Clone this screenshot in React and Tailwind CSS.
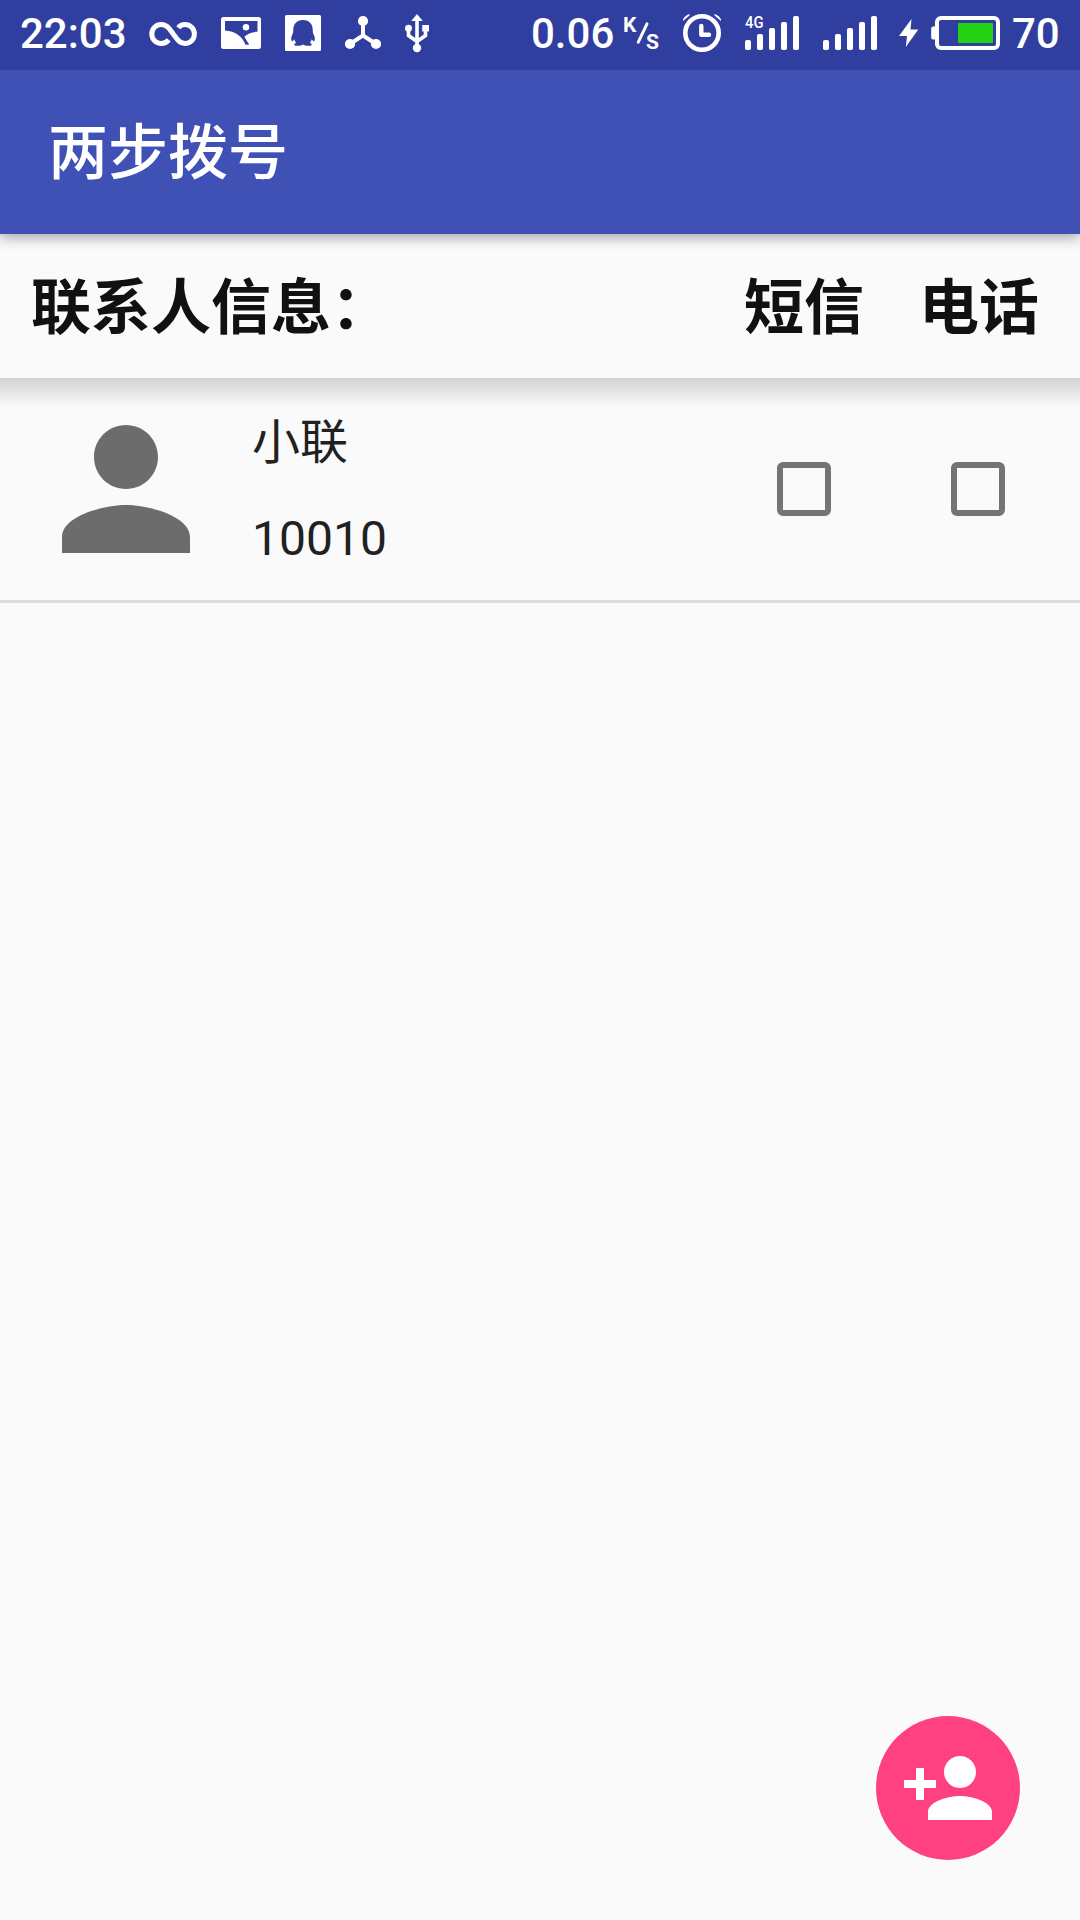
const PERSON = "M12 12c2.21 0 4-1.79 4-4s-1.79-4-4-4-4 1.79-4 4 1.79 4 4 4zm0 2c-2.67 0-8 1.34-8 4v2h16v-2c0-2.66-5.33-4-8-4z";
const PERSON_ADD = "M15 12c2.21 0 4-1.79 4-4s-1.79-4-4-4-4 1.79-4 4 1.79 4 4 4zm-9-2V7H4v3H1v2h3v3h2v-3h3v-2H6zm9 4c-2.67 0-8 1.34-8 4v2h16v-2c0-2.66-5.33-4-8-4z";

function InfinityIcon() {
  return (
    <svg className="h-[70px] w-12 shrink-0" viewBox="149 0 48 70" fill="none" stroke="white" strokeWidth="5">
      <path d="M168.8 39.8C166.8 42.2 164.200 43.400 161.200 43.400A9.400 9.400 0 0 1 161.200 24.600C164.800 24.600 167 26 169 28.300L177.200 39.200C179.400 42 182 43.400 185 43.400A9.400 9.400 0 0 0 185 24.600C182.400 24.600 180 25.600 178.300 27.800" />
    </svg>
  );
}

function PictureIcon() {
  return (
    <svg className="ml-6 h-[70px] w-10 shrink-0" viewBox="221 0 40 70" fill="white">
      <path fillRule="evenodd" d="M223.500 17H258.500Q261 17 261 19.500V46.500Q261 49 258.500 49H223.500Q221 49 221 46.500V19.500Q221 17 223.500 17ZM225 21V30.500C235 31 242.500 36.500 245.500 44.700H249.200L244.300 36.800C247.500 33.500 252 32 257.500 31.800V21Z" />
      <circle cx="246" cy="27.200" r="3.200" />
    </svg>
  );
}

function PenguinIcon() {
  return (
    <svg className="ml-6 h-[70px] w-9 shrink-0" viewBox="285 0 36 70">
      <rect x="285" y="15" width="36" height="36" rx="1.500" fill="white" />
      <path fill="#303f9f" d="M303 20C296.500 20 293.300 24.500 293.300 29.500C293.300 32.500 292.800 33.500 291.900 35.500C290.900 37.800 291 40.800 292 41.200C292.800 41.400 293.600 40.200 294.300 39.200C294.600 40.800 295.400 42 296.300 42.800C294.600 43.300 294 44 294.400 44.900C295.400 46.300 301.500 46 303 44.600C304.500 46 310.600 46.300 311.600 44.900C312 44 311.400 43.300 309.700 42.800C310.600 42 311.400 40.800 311.700 39.200C312.400 40.200 313.200 41.400 314 41.200C315 40.800 315.100 37.800 314.100 35.500C313.200 33.500 312.700 32.500 312.700 29.500C312.700 24.500 309.500 20 303 20Z" />
    </svg>
  );
}

function NodesIcon() {
  return (
    <svg className="ml-6 h-[70px] w-9 shrink-0" viewBox="345 0 36 70" fill="white">
      <path d="M363 21V35.500L350 44M363 35.500L376 44" fill="none" stroke="white" strokeWidth="4" />
      <circle cx="363" cy="21" r="5.100" />
      <circle cx="350" cy="44" r="5.100" />
      <circle cx="376" cy="44" r="5.100" />
    </svg>
  );
}

function UsbIcon() {
  return (
    <svg className="ml-6 h-[70px] w-6 shrink-0" viewBox="405 0 24 70" fill="white">
      <path d="M417 20V48M408.500 28V35.500L417 41.500L425.500 35.500V28" fill="none" stroke="white" strokeWidth="3.600" />
      <path d="M417 14L422.800 21H411.200Z" />
      <circle cx="408.500" cy="28.300" r="3.500" />
      <rect x="422.200" y="25" width="6.800" height="6.500" />
      <circle cx="417" cy="48" r="4.200" />
    </svg>
  );
}

function AlarmIcon() {
  return (
    <svg className="h-[70px] w-10 shrink-0" viewBox="682 0 40 70" fill="none" stroke="white">
      <circle cx="702" cy="33" r="16.700" strokeWidth="4.600" />
      <path d="M701.300 26V34.700H709" strokeWidth="4.400" strokeLinejoin="round" strokeLinecap="round" />
      <path d="M683 19.500Q684.500 15.500 689.500 14V15.500L683 21ZM721 19.500Q719.500 15.500 714.500 14V15.500L721 21Z" fill="white" stroke="none" />
    </svg>
  );
}

function SignalIcon({ label }) {
  return (
    <svg className="h-[70px] w-[54px] shrink-0" viewBox="0 0 54 70" fill="white">
      <rect x="0" y="40" width="6" height="10" rx="1.800" />
      <rect x="12" y="34" width="6" height="16" rx="1.800" />
      <rect x="24" y="28" width="6" height="22" rx="1.800" />
      <rect x="36" y="22" width="6" height="28" rx="1.800" />
      <rect x="48" y="16" width="6" height="34" rx="1.800" />
      {label && (
        <text x="0" y="28" fontSize="16" fontWeight="500" fontFamily="Roboto, sans-serif" textLength="18.500" lengthAdjust="spacingAndGlyphs">{label}</text>
      )}
    </svg>
  );
}

function BoltIcon() {
  return (
    <svg className="ml-[22px] h-[70px] w-5 shrink-0" viewBox="899 0 20 70" fill="white">
      <path d="M911.500 19L899 36H907L905.800 47L918.300 29.500H910.500Z" />
    </svg>
  );
}

function BatteryIcon() {
  return (
    <svg className="ml-3 h-[70px] w-[69px] shrink-0" viewBox="931 0 69 70">
      <rect x="937" y="18" width="61" height="30" rx="4" fill="none" stroke="white" strokeWidth="4" />
      <path d="M935.500 26.500H933Q931.200 26.500 931.200 28.500V37.500Q931.200 39.500 933 39.500H935.500Z" fill="white" />
      <rect x="958" y="23" width="35" height="20" rx=".8" fill="#22d014" />
    </svg>
  );
}

function StatusBar() {
  return (
    <div className="z-20 flex h-[70px] shrink-0 items-center bg-[#303f9f] text-[42px] leading-none font-medium text-white">
      <span className="w-[149px] shrink-0 pb-[2px] pl-5">22:03</span>
      <InfinityIcon />
      <PictureIcon />
      <PenguinIcon />
      <NodesIcon />
      <UsbIcon />
      <span className="ml-[102px] w-[93px] shrink-0 pb-[2px]">0.06</span>
      <svg className="mr-[22px] h-[70px] w-9 shrink-0" viewBox="624 0 36 70" fill="white" fontFamily="Roboto, sans-serif" fontWeight="700">
        <text x="623" y="32.300" fontSize="21">K</text>
        <path d="M638.300 42.200L647 23.800" stroke="white" strokeWidth="3" strokeLinecap="round" />
        <text x="646" y="48.500" fontSize="21">S</text>
      </svg>
      <AlarmIcon />
      <div className="ml-[23px] flex gap-6">
        <SignalIcon label="4G" />
        <SignalIcon />
      </div>
      <BoltIcon />
      <BatteryIcon />
      <span className="ml-3 pb-[2px]">70</span>
    </div>
  );
}

function Checkbox({ label }) {
  return (
    <button
      role="checkbox"
      aria-checked="false"
      aria-label={label}
      className="h-[54px] w-[54px] rounded-[6px] border-[6px] border-[#747474]"
    />
  );
}

function ContactRow({ name, phone }) {
  return (
    <div className="flex h-[225px] border-b-[3px] border-[#dcdcdc] bg-[linear-gradient(to_bottom,#d2d2d2_0px,#fafafa_29px)]">
      <svg className="mt-[15px] ml-[30px] h-48 w-48" viewBox="0 0 24 24" fill="#6c6c6c">
        <path d={PERSON} />
      </svg>
      <div className="ml-[30px] flex-1 pt-[17px] text-5xl leading-[96px] text-[#212121]">
        <div>{name}</div>
        <div>{phone}</div>
      </div>
      <div className="mr-[75px] flex items-center gap-[120px]">
        <Checkbox label="短信" />
        <Checkbox label="电话" />
      </div>
    </div>
  );
}

export default function App() {
  return (
    <div className="flex h-[1920px] w-[1080px] flex-col overflow-hidden bg-[#fafafa] font-['Roboto','Noto_Sans_CJK_SC',sans-serif]">
      <StatusBar />
      <header className="z-10 flex h-[164px] items-center bg-[#3f51b5] pt-1 pl-12 text-6xl font-medium text-white shadow-[0_4px_12px_rgba(0,0,0,0.32)]">
        <h1>两步拨号</h1>
      </header>
      <div className="flex h-36 items-center pt-[6px] pr-[41px] pl-[31px] text-6xl font-bold text-[#111111]">
        <h2 className="flex-1">联系人信息：</h2>
        <span className="mr-[55px]">短信</span>
        <span>电话</span>
      </div>
      <ContactRow name="小联" phone="10010" />
      <button aria-label="添加联系人" className="mt-auto mr-[60px] mb-[60px] flex h-36 w-36 items-center justify-center self-end rounded-full bg-[#ff4081]">
        <svg className="h-24 w-24" viewBox="0 0 24 24" fill="white">
          <path d={PERSON_ADD} />
        </svg>
      </button>
    </div>
  );
}
